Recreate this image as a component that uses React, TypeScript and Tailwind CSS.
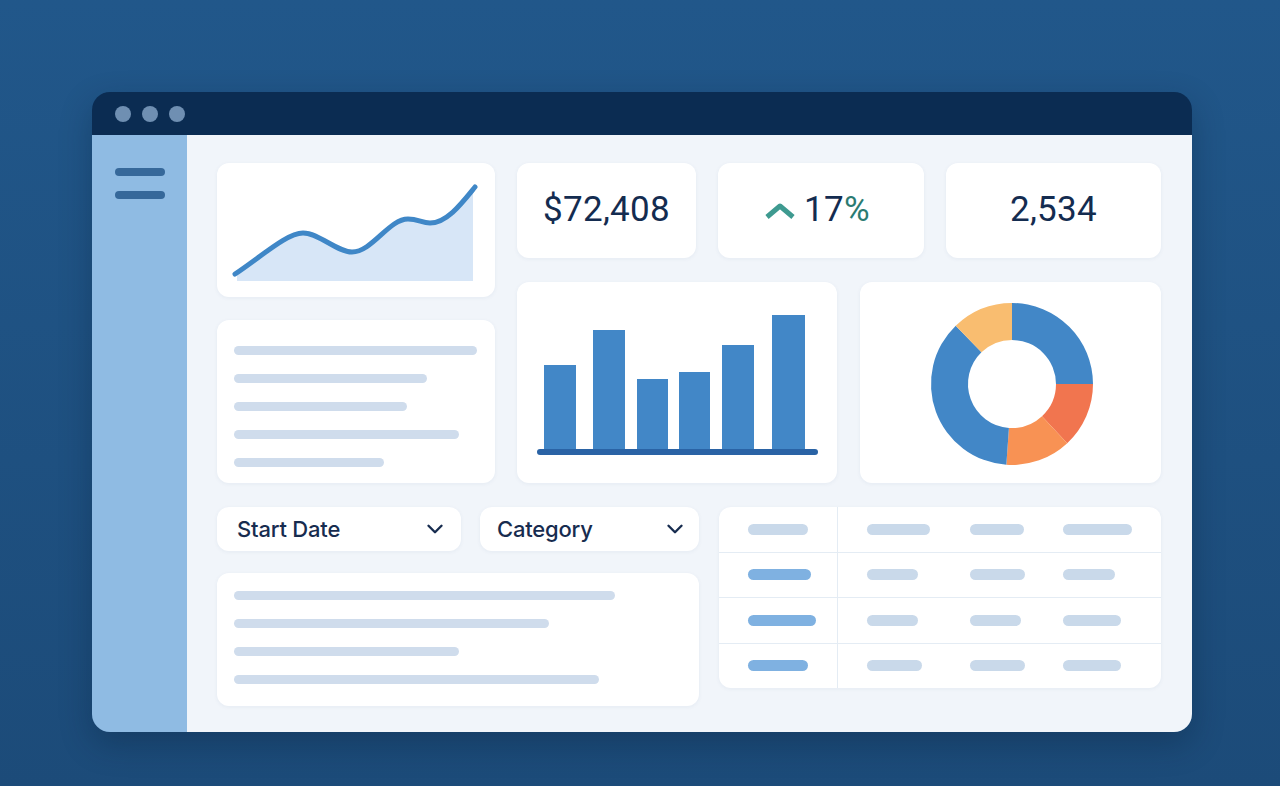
import { ChevronDown } from 'lucide-react';

const polar = (cx: number, cy: number, r: number, deg: number) => {
  const a = ((deg - 90) * Math.PI) / 180;
  return [cx + r * Math.cos(a), cy + r * Math.sin(a)];
};

// annular sector path, angles clockwise from 12 o'clock
const sector = (cx: number, cy: number, ro: number, ri: number, a0: number, a1: number) => {
  const [x0, y0] = polar(cx, cy, ro, a0);
  const [x1, y1] = polar(cx, cy, ro, a1);
  const [x2, y2] = polar(cx, cy, ri, a1);
  const [x3, y3] = polar(cx, cy, ri, a0);
  const large = a1 - a0 > 180 ? 1 : 0;
  return `M${x0} ${y0} A${ro} ${ro} 0 ${large} 1 ${x1} ${y1} L${x2} ${y2} A${ri} ${ri} 0 ${large} 0 ${x3} ${y3} Z`;
};

const donutSlices = [
  { from: 0, to: 90, color: '#4287c7' },
  { from: 90, to: 137, color: '#f1754f' },
  { from: 137, to: 184, color: '#f89254' },
  { from: 184, to: 316, color: '#4287c7' },
  { from: 316, to: 360, color: '#f9bd70' },
];

const bars = [
  { x: 27, top: 83, w: 32 },
  { x: 76, top: 48, w: 32 },
  { x: 120, top: 97, w: 31 },
  { x: 162, top: 90, w: 31 },
  { x: 205, top: 63, w: 32 },
  { x: 255, top: 33, w: 33 },
];

const leftLines = [243, 193, 173, 225, 150];
const bottomLines = [381, 315, 225, 365];

// [width, isBlue] per cell
const tableRows: [number, boolean][][] = [
  [[60, false], [63, false], [54, false], [69, false]],
  [[63, true], [51, false], [55, false], [52, false]],
  [[68, true], [51, false], [51, false], [58, false]],
  [[60, true], [55, false], [55, false], [58, false]],
];

const card = 'bg-white rounded-xl shadow-[0_1px_4px_rgba(30,70,120,0.06)]';

function LineChartCard() {
  return (
    <div className={`${card} h-[134px]`}>
      <svg width="278" height="134" viewBox="0 0 278 134">
        <path
          d="M20 110 C 45 93, 70 70, 86 70 C 102 70, 120 89, 135 89 C 155 89, 172 56, 191 56 C 201 56, 205 60, 213 60 C 230 60, 245 40, 258 24 L256 24 L256 118 L20 118 Z"
          fill="#d7e6f7"
        />
        <path
          d="M18 111 C 45 93, 70 70, 86 70 C 102 70, 120 89, 135 89 C 155 89, 172 56, 191 56 C 201 56, 205 60, 213 60 C 230 60, 245 40, 258 24"
          fill="none"
          stroke="#3f87c7"
          strokeWidth="5"
          strokeLinecap="round"
        />
      </svg>
    </div>
  );
}

function StatCard({ width, children }: { width: string; children: React.ReactNode }) {
  return (
    <div className={`${card} ${width} h-[95px] flex items-center justify-center`}>
      {children}
    </div>
  );
}

function Dropdown({ label, box }: { label: string; box: string }) {
  return (
    <div className={`${card} ${box} h-[44px] flex items-center justify-between`}>
      <span className="text-[22px] font-medium text-[#172c4f] tracking-[-0.2px]">{label}</span>
      <ChevronDown size={26} strokeWidth={2.2} className="text-[#172c4f]" />
    </div>
  );
}

export default function App() {
  return (
    <div
      className="min-h-screen w-full bg-gradient-to-b from-[#21578a] to-[#1c4b79] pt-[92px] pl-[92px]"
      style={{ fontFamily: 'Inter, "Noto Sans", sans-serif' }}
    >
      <div className="w-[1100px] h-[640px] rounded-[18px] overflow-hidden flex flex-col shadow-[0_12px_32px_rgba(5,25,50,0.3)]">
        {/* title bar */}
        <div className="h-[43px] bg-[#0b2c52] flex items-center gap-[11px] pl-[23px]">
          <span className="w-[16px] h-[16px] rounded-full bg-[#6f8fb2]" />
          <span className="w-[16px] h-[16px] rounded-full bg-[#6f8fb2]" />
          <span className="w-[16px] h-[16px] rounded-full bg-[#6f8fb2]" />
        </div>

        <div className="flex flex-1">
          {/* sidebar */}
          <aside className="w-[95px] bg-[#8fbbe3] pt-[33px] pl-[23px] flex flex-col gap-[15px]">
            <span className="w-[50px] h-[8px] rounded-full bg-[#36689a]" />
            <span className="w-[50px] h-[8px] rounded-full bg-[#36689a]" />
          </aside>

          {/* content */}
          <main className="flex-1 bg-[#f1f5fa] pt-[28px] pl-[30px] pr-[31px] flex flex-col gap-[24px]">
            <div className="flex gap-[22px]">
              <div className="w-[278px] flex flex-col gap-[23px]">
                <LineChartCard />
                <div className={`${card} h-[163px] pt-[26px] pl-[17px] flex flex-col gap-[19px]`}>
                  {leftLines.map((w, i) => (
                    <span key={i} className="h-[9px] rounded-full bg-[#cfdcec]" style={{ width: w }} />
                  ))}
                </div>
              </div>

              <div className="w-[644px] flex flex-col gap-[24px]">
                <div className="flex gap-[22px]" style={{ fontFamily: 'Roboto, "Liberation Sans", sans-serif' }}>
                  <StatCard width="w-[179px]">
                    <span className="text-[35px] text-[#142c50] tracking-[0.3px]">$72,408</span>
                  </StatCard>
                  <StatCard width="w-[206px]">
                    <div className="flex items-center gap-[8px] pr-[8px]">
                      <svg width="32" height="18" viewBox="0 0 32 18">
                        <polyline
                          points="3,15 16,4 29,15"
                          fill="none"
                          stroke="#3e9a90"
                          strokeWidth="5"
                          strokeLinejoin="round"
                        />
                      </svg>
                      <span className="text-[35px] text-[#142c50] tracking-[0.3px]">
                        17<span className="text-[#2b7b72]">%</span>
                      </span>
                    </div>
                  </StatCard>
                  <StatCard width="w-[215px]">
                    <span className="text-[35px] text-[#142c50] tracking-[0.3px]">2,534</span>
                  </StatCard>
                </div>

                <div className="flex gap-[23px]">
                  <div className={`${card} w-[320px] h-[201px]`}>
                    <svg width="320" height="201" viewBox="0 0 320 201">
                      {bars.map((b, i) => (
                        <rect key={i} x={b.x} y={b.top} width={b.w} height={170 - b.top} fill="#4287c7" />
                      ))}
                      <line x1="23" y1="170" x2="298" y2="170" stroke="#2a63a5" strokeWidth="6" strokeLinecap="round" />
                    </svg>
                  </div>
                  <div className={`${card} w-[301px] h-[201px]`}>
                    <svg width="301" height="201" viewBox="0 0 301 201">
                      {donutSlices.map((s, i) => (
                        <path key={i} d={sector(152, 102, 81, 44, s.from, s.to)} fill={s.color} />
                      ))}
                    </svg>
                  </div>
                </div>
              </div>
            </div>

            <div className="flex gap-[20px]">
              <div className="w-[482px] flex flex-col gap-[22px]">
                <div className="flex gap-[19px]">
                  <Dropdown label="Start Date" box="w-[244px] pl-[20px] pr-[13px]" />
                  <Dropdown label="Category" box="w-[219px] pl-[17px] pr-[11px]" />
                </div>
                <div className={`${card} h-[133px] pt-[18px] pl-[17px] flex flex-col gap-[19px]`}>
                  {bottomLines.map((w, i) => (
                    <span key={i} className="h-[9px] rounded-full bg-[#cfdcec]" style={{ width: w }} />
                  ))}
                </div>
              </div>

              <div className={`${card} w-[442px] h-[181px] flex flex-col overflow-hidden`}>
                {tableRows.map((row, r) => (
                  <div
                    key={r}
                    className={`grid grid-cols-[119px_132px_93px_1fr] flex-1 ${r > 0 ? 'border-t border-[#e4ecf4]' : ''}`}
                  >
                    {row.map(([w, blue], c) => (
                      <div
                        key={c}
                        className={`flex items-center ${c === 0 ? 'pl-[29px] border-r border-[#e4ecf4]' : c === 1 ? 'pl-[29px]' : ''}`}
                      >
                        <span
                          className={`h-[11px] rounded-full ${blue ? 'bg-[#7fb1e1]' : 'bg-[#c9d9ea]'}`}
                          style={{ width: w }}
                        />
                      </div>
                    ))}
                  </div>
                ))}
              </div>
            </div>
          </main>
        </div>
      </div>
    </div>
  );
}
